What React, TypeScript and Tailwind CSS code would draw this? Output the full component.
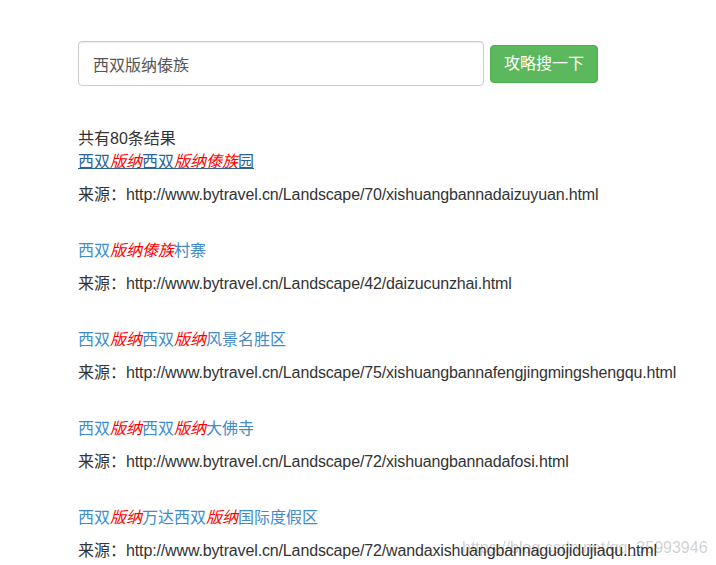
import React from 'react';

// Search result page — input + button, then a list of scenic-spot results.

type Part = { text: string; hit?: boolean };

interface Result {
  title: Part[];
  url: string;
  hover?: boolean;
}

const RESULTS: Result[] = [
  {
    title: [{ text: '西双' }, { text: '版纳', hit: true }, { text: '西双' }, { text: '版纳傣族', hit: true }, { text: '园' }],
    url: 'http://www.bytravel.cn/Landscape/70/xishuangbannadaizuyuan.html',
    hover: true,
  },
  {
    title: [{ text: '西双' }, { text: '版纳傣族', hit: true }, { text: '村寨' }],
    url: 'http://www.bytravel.cn/Landscape/42/daizucunzhai.html',
  },
  {
    title: [{ text: '西双' }, { text: '版纳', hit: true }, { text: '西双' }, { text: '版纳', hit: true }, { text: '风景名胜区' }],
    url: 'http://www.bytravel.cn/Landscape/75/xishuangbannafengjingmingshengqu.html',
  },
  {
    title: [{ text: '西双' }, { text: '版纳', hit: true }, { text: '西双' }, { text: '版纳', hit: true }, { text: '大佛寺' }],
    url: 'http://www.bytravel.cn/Landscape/72/xishuangbannadafosi.html',
  },
  {
    title: [{ text: '西双' }, { text: '版纳', hit: true }, { text: '万达西双' }, { text: '版纳', hit: true }, { text: '国际度假区' }],
    url: 'http://www.bytravel.cn/Landscape/72/wandaxishuangbannaguojidujiaqu.html',
  },
];

function ResultItem({ item }: { item: Result }) {
  return (
    <div className="mb-[33px]">
      <a
        href="#"
        className={`block w-fit leading-[23px] ${item.hover ? 'text-[#2a6496] underline' : 'text-[#428bca]'}`}
      >
        {item.title.map((p, i) =>
          p.hit ? (
            <em key={i} className="italic text-[#ff0000]">
              {p.text}
            </em>
          ) : (
            <span key={i}>{p.text}</span>
          )
        )}
      </a>
      <p className="mt-[10px] leading-[23px]">
        来源：<span className="tracking-[-0.14px]">{item.url}</span>
      </p>
    </div>
  );
}

export default function App() {
  return (
    <div
      className="relative h-[565px] w-[716px] overflow-hidden bg-white pl-[78px] pt-[41px] text-[16px] text-[#333]"
      style={{ fontFamily: '"Liberation Sans", "Noto Sans CJK SC", sans-serif' }}
    >
      {/* ── Search bar ───────────────────────────── */}
      <div className="flex items-center gap-[6px]">
        <input
          readOnly
          value="西双版纳傣族"
          className="h-[45px] w-[406px] rounded-[4px] border border-[#ccc] px-[14px] text-[16px] text-[#555] shadow-[inset_0_1px_1px_rgba(0,0,0,0.075)] outline-none"
        />
        <button className="h-[38px] w-[108px] rounded-[4px] border border-[#4cae4c] bg-[#5cb85c] text-[16px] text-white">
          攻略搜一下
        </button>
      </div>

      {/* ── Results ──────────────────────────────── */}
      <div className="mt-[41px]">
        <div className="leading-[23px]">共有80条结果</div>
        {RESULTS.map((r, i) => (
          <ResultItem key={i} item={r} />
        ))}
      </div>

      {/* watermark */}
      <div className="pointer-events-none absolute left-[462px] top-[536px] text-[16px] leading-[23px] text-black/20">
        https://blog.csdn.net/qq_35993946
      </div>
    </div>
  );
}
